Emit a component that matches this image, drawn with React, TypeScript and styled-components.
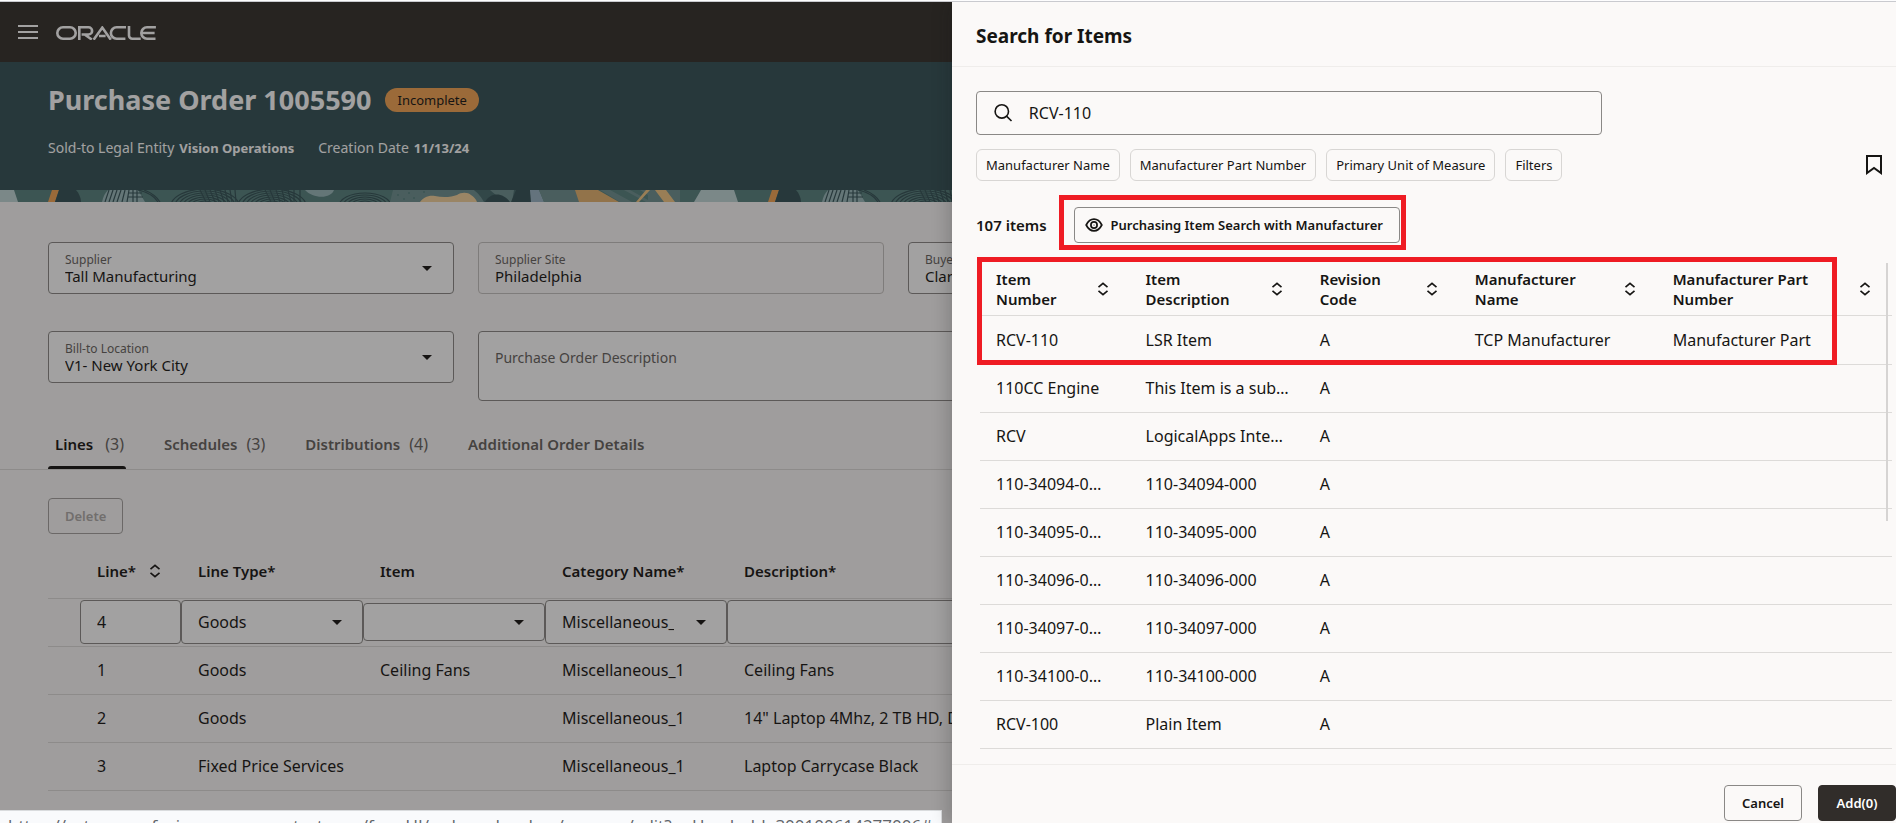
import React from "react";
import styled, { createGlobalStyle, css } from "styled-components";

const GlobalStyle = createGlobalStyle`
  *, *::before, *::after { box-sizing: border-box; }
  body { margin: 0; overflow: hidden; }
  body, button, input, select, textarea {
    font-family: "Noto Sans", "Open Sans", sans-serif;
    color: #161513;
  }
  button, select { cursor: pointer; }
`;

const ink = "#161513";
const muted = "#65625e";
const outline = "#8a8886";
const divider = "#dddbd9";
const surface = "#fbf9f8";

/* ---------- shell ---------- */

const Shell = styled.div`
  height: 100vh;
  display: flex;
  flex-direction: column;
  overflow: hidden;
`;

const BrowserEdge = styled.div`
  flex: none;
  height: 2px;
  background: #fdfdfe;
  border-bottom: 1px solid #c9cacf;
`;

const Stage = styled.div`
  position: relative;
  flex: 1;
  min-height: 0;
  overflow: hidden;
`;

const Page = styled.main`
  height: 100%;
  overflow: hidden;
  background: ${surface};
`;

const Scrim = styled.div`
  position: absolute;
  inset: 0;
  background: rgba(22, 21, 19, 0.4);
`;

/* ---------- page header ---------- */

const TopBar = styled.header`
  display: flex;
  align-items: center;
  gap: 18px;
  height: 60px;
  padding: 2px 18px 0;
  background: #332f2b;
`;

const MenuButton = styled.button`
  display: flex;
  padding: 0;
  border: 0;
  background: none;
`;

const Banner = styled.section`
  height: 128px;
  padding: 19px 48px 0;
  background: #325155;
  color: #fff;
`;

const TitleRow = styled.div`
  display: flex;
  align-items: center;
  gap: 14px;
  height: 38px;
`;

const PageTitle = styled.h1`
  margin: 0;
  font-size: 27px;
  line-height: 38px;
  font-weight: 700;
`;

const Badge = styled.span`
  padding: 0 12px;
  border-radius: 12px;
  background: #f4a452;
  color: ${ink};
  font-size: 13px;
  line-height: 24px;
`;

const Meta = styled.dl`
  display: flex;
  gap: 24px;
  margin: 19px 0 0;
`;

const MetaItem = styled.div`
  display: flex;
  align-items: baseline;
  gap: 5px;
  line-height: 20px;
  dt { font-size: 14px; }
  dd { margin: 0; font-size: 13px; font-weight: 700; }
`;

const Ribbon = styled.svg`
  display: block;
  width: 100%;
  height: 12px;
`;

/* ---------- form ---------- */

const Form = styled.form`
  display: grid;
  grid-template-columns: repeat(4, minmax(0, 1fr));
  column-gap: 24px;
  row-gap: 37px;
  align-items: start;
  padding: 40px 152px 0 48px;
`;

const FieldBox = styled.label<{ $readOnly?: boolean }>`
  position: relative;
  display: flex;
  flex-direction: column;
  height: 52px;
  padding: 11px 16px 0;
  border: 1px solid ${p => (p.$readOnly ? "#c4c2c0" : outline)};
  border-radius: 4px;
  background: ${p => (p.$readOnly ? "transparent" : "#fff")};
`;

const FieldLabel = styled.span`
  color: ${muted};
  font-size: 12px;
  line-height: 11px;
`;

const bareControl = css`
  appearance: none;
  width: 100%;
  padding: 0;
  border: 0;
  outline: 0;
  background: none;
`;

const FieldSelect = styled.select`
  ${bareControl}
  height: 21px;
  font-size: 15px;
`;

const FieldInput = styled.input`
  ${bareControl}
  height: 21px;
  font-size: 15px;
`;

const Caret = styled.svg<{ $right: number }>`
  position: absolute;
  right: ${p => p.$right}px;
  top: 50%;
  margin-top: -2px;
  pointer-events: none;
`;

const Description = styled.textarea`
  grid-column: span 2;
  display: block;
  width: 100%;
  height: 70px;
  padding: 16px;
  border: 1px solid ${outline};
  border-radius: 4px;
  background: #fff;
  font-size: 14px;
  line-height: 20px;
  resize: none;
  &::placeholder { color: ${muted}; opacity: 1; }
`;

/* ---------- tabs ---------- */

const Tabs = styled.div`
  display: flex;
  gap: 31px;
  margin-top: 20px;
  padding-left: 48px;
  border-bottom: 1px solid ${divider};
`;

const Tab = styled.button<{ $active?: boolean }>`
  display: flex;
  align-items: center;
  gap: ${p => (p.$active ? 12 : 9)}px;
  height: 48px;
  padding: 0 2px 2px 7px;
  border: 0;
  background: none;
  color: ${p => (p.$active ? ink : muted)};
  font-size: 15px;
  font-weight: 600;
  position: relative;
  ${p => p.$active && css`
    &::after {
      content: "";
      position: absolute;
      left: 0;
      right: 0;
      bottom: 0;
      height: 3px;
      border-radius: 3px 3px 0 0;
      background: ${ink};
    }
  `}
`;

const TabCount = styled.span`
  color: ${muted};
  font-size: 16px;
  font-weight: 400;
`;

/* ---------- buttons ---------- */

const Button = styled.button<{ $primary?: boolean }>`
  height: 36px;
  min-width: 75px;
  padding: 0 16px;
  border: 1px solid ${p => (p.$primary ? "#312d2a" : outline)};
  border-radius: 4px;
  background: ${p => (p.$primary ? "#312d2a" : "transparent")};
  color: ${p => (p.$primary ? "#fff" : ink)};
  font-size: 13px;
  font-weight: 600;
  &:disabled { color: #aeaba8; border-color: #a3a19f; }
`;

/* ---------- order lines ---------- */

const LinesPanel = styled.section`
  padding: 28px 0 0 48px;
`;

const LinesTable = styled.table`
  width: 100%;
  margin-top: 10px;
  table-layout: fixed;
  border-collapse: separate;
  border-spacing: 0;
  font-size: 16px;
  th, td {
    height: 48px;
    padding: 0 17px 2px;
    border-bottom: 1px solid ${divider};
    text-align: left;
    font-weight: 400;
    white-space: nowrap;
  }
  th { height: 55px; padding-bottom: 0; font-size: 15px; font-weight: 600; }
  th:first-child, td:first-child { width: 32px; padding: 0; }
  th:nth-child(2) { width: 101px; }
  th:nth-child(3), th:nth-child(4), th:nth-child(5) { width: 182px; }
  td.editing { padding: 0 0 2px; }
`;

const EditCell = styled.div<{ $compact?: boolean }>`
  position: relative;
  height: ${p => (p.$compact ? 38 : 44)}px;
  border: 1px solid ${outline};
  border-radius: 4px;
  background: #fff;
`;

const CellInput = styled.input`
  ${bareControl}
  height: 100%;
  padding: 0 16px;
  font-size: 16px;
`;

const CellSelectControl = styled.select`
  ${bareControl}
  height: 100%;
  padding: 0 52px 0 16px;
  font-size: 16px;
`;

const HeadSort = styled.div`
  display: flex;
  align-items: center;
  gap: 13px;
`;

/* ---------- drawer ---------- */

const Drawer = styled.aside`
  position: absolute;
  top: 0;
  right: 0;
  bottom: 0;
  width: calc(50% - 4px);
  display: flex;
  flex-direction: column;
  background: ${surface};
  box-shadow: -4px 0 16px rgba(22, 21, 19, 0.2);
`;

const DrawerHeader = styled.div`
  display: flex;
  align-items: center;
  flex: none;
  height: 65px;
  padding: 4px 24px 0;
  border-bottom: 1px solid #efedeb;
`;

const DrawerTitle = styled.h2`
  margin: 0;
  font-size: 19px;
  line-height: 28px;
  font-weight: 700;
`;

const DrawerBody = styled.div`
  flex: 1;
  min-height: 0;
  overflow: hidden;
  padding-top: 24px;
`;

const SearchBox = styled.label`
  display: flex;
  align-items: center;
  gap: 16px;
  width: calc(67% - 6px);
  height: 44px;
  margin-left: 24px;
  padding: 0 17px;
  border: 1px solid ${outline};
  border-radius: 4px;
`;

const SearchInput = styled.input`
  ${bareControl}
  height: 40px;
  font-size: 16px;
`;

const FilterRow = styled.div`
  display: flex;
  align-items: center;
  justify-content: space-between;
  margin-top: 14px;
  padding: 0 13px 0 24px;
`;

const Chips = styled.div`
  display: flex;
  gap: 10px;
`;

const Chip = styled.button`
  height: 32px;
  padding: 0 9px;
  border: 1px solid #d8d6d4;
  border-radius: 6px;
  background: transparent;
  font-size: 13px;
`;

const IconButton = styled.button`
  display: flex;
  padding: 0;
  border: 0;
  background: none;
`;

const ResultBar = styled.div`
  display: flex;
  align-items: center;
  gap: 27px;
  margin-top: 26px;
  padding-left: 24px;
`;

const ResultCount = styled.span`
  font-size: 15px;
  font-weight: 600;
`;

const ViewPicker = styled.div`
  position: relative;
`;

const ViewButton = styled(Button)`
  display: flex;
  align-items: center;
  gap: 8px;
  padding-left: 10px;
`;

const Highlight = styled.div<{ $inset: string }>`
  position: absolute;
  inset: ${p => p.$inset};
  border: 5px solid #ef1c24;
  pointer-events: none;
`;

const Results = styled.div`
  position: relative;
  margin: 20px 4px 0 28px;
`;

const HeaderMark = styled(Highlight)`
  bottom: auto;
  height: 108px;
`;

const Scrollbar = styled.div`
  position: absolute;
  top: 0;
  right: 4px;
  width: 2px;
  height: 258px;
  background: #d6d4d3;
`;

const ItemsTable = styled.table`
  width: 100%;
  table-layout: fixed;
  border-collapse: separate;
  border-spacing: 0;
  th, td {
    padding: 0 0 2px 16px;
    border-bottom: 1px solid ${divider};
    text-align: left;
  }
  th {
    height: 53px;
    padding-bottom: 0;
    font-size: 15px;
    line-height: 20px;
    font-weight: 600;
  }
  td {
    height: 48px;
    font-size: 16px;
    white-space: nowrap;
  }
  tbody tr:first-child td { height: 49px; padding-bottom: 0; }
`;

const ItemHead = styled.div`
  display: flex;
  align-items: center;
  justify-content: space-between;
  padding-right: 21px;
`;

const HeadLabel = styled.span<{ $narrow?: boolean }>`
  width: ${p => (p.$narrow ? "min-content" : "150px")};
`;

const DrawerFooter = styled.div`
  display: flex;
  flex: none;
  align-items: flex-start;
  justify-content: flex-end;
  gap: 16px;
  height: 59px;
  padding-top: 20px;
  border-top: 1px solid #efedeb;
`;

const FooterButton = styled(Button)`
  min-width: 78px;
`;

/* ---------- browser status ---------- */

const StatusBubble = styled.div`
  position: absolute;
  left: 0;
  bottom: 0;
  width: calc(50% - 6px);
  height: 13px;
  padding: 3px 8px 0;
  overflow: hidden;
  border: 1px solid #d9dbdd;
  border-width: 1px 1px 0 0;
  background: #f9fafc;
  color: #5f6368;
  font-family: "Open Sans", sans-serif;
  font-size: 17px;
  line-height: 24px;
  white-space: nowrap;
`;

/* ---------- drawings ---------- */

const OracleLogo = () => (
  <svg width="100" height="14" viewBox="0 0 100 14" fill="none" stroke="#fff" strokeWidth="2.6" role="img" aria-label="Oracle">
    <rect x="1.3" y="1.3" width="18.4" height="11.4" rx="5.7" />
    <path d="M23.3 13.9V1.3h9.2a3.6 3.6 0 0 1 0 7.2H25.6M28.6 8.5l7.2 5" />
    <path d="M37.6 13.7 46.3 1.6 54.8 13.7M43 10h6.6" />
    <path d="M70 1.3H60.6a5.7 5.7 0 0 0 0 11.4h8.8" />
    <path d="M73 .1v9.3a3.3 3.3 0 0 0 3.3 3.3h8.4" />
    <path d="M99.9 1.3H91a5.7 5.7 0 0 0 0 11.4h8.5M85.6 7h13" />
  </svg>
);

const SortIcon = () => (
  <svg width="12" height="14" viewBox="0 0 12 14" fill="none" stroke={ink} strokeWidth="1.6" aria-hidden="true">
    <path d="M1.5 5.2 6 1.3l4.5 3.9M1.5 8.8 6 12.7l4.5-3.9" />
  </svg>
);

const CaretDown = ({ right }: { right: number }) => (
  <Caret $right={right} width="10" height="5" viewBox="0 0 10 5" aria-hidden="true">
    <path d="M0 0h10L5 5z" fill={ink} />
  </Caret>
);

const SearchIcon = () => (
  <svg width="20" height="20" viewBox="0 0 20 20" fill="none" stroke={ink} strokeWidth="1.7" aria-hidden="true">
    <circle cx="8.3" cy="8.3" r="7.1" />
    <path d="m13.3 13.3 5.3 5.2" />
  </svg>
);

const EyeIcon = () => (
  <svg width="18" height="14" viewBox="0 0 18 14" fill="none" stroke={ink} strokeWidth="1.7" aria-hidden="true">
    <path d="M1.2 7C3 3.4 5.7 1.1 9 1.1s6 2.3 7.8 5.9c-1.8 3.6-4.5 5.9-7.8 5.9S3 10.600 1.2 7z" />
    <circle cx="9" cy="7" r="3.1" />
    <circle cx="9" cy="7" r="0.6" fill={ink} stroke="none" />
  </svg>
);

const BookmarkIcon = () => (
  <svg width="18" height="20" viewBox="0 0 18 20" fill="none" stroke={ink} strokeWidth="2" aria-hidden="true">
    <path d="M2 1h14v17l-7-5-7 5z" />
  </svg>
);

const arcs = (cx: number, radii: number[]) =>
  radii.map(r => <ellipse key={`${cx}-${r}`} cx={cx} cy="16" rx={r} ry={r * 0.5} />);

const BannerRibbon = () => (
  <Ribbon aria-hidden="true">
    <defs>
      <pattern id="ribbon" width="720" height="12" patternUnits="userSpaceOnUse">
        <rect width="720" height="12" fill="#55807d" />
        <path d="M0 0h14l4 12H0zM701 0h19v12h-26z" fill="#bed5d6" />
        <path d="M52 0h7l-4 12h-7z" fill="#f4a452" />
        <path d="M59 0h17c3 3 5 8 5 12H55z" fill="#325155" />
        <path d="M108 0h30l7 12h-43c1-5 3-9 6-12z" fill="#98b7ba" />
        <g fill="none" stroke="#325155" strokeWidth="1.2">
          <path d="M109 0l-4 12M113 0l-4 12M117 0l-4 12M121 0l-4 12M125 0l-3 12M129 0l-2 12M133 0v12M137 0v12M128 3h14M128 7h15" />
          <path d="M138 0q14 3 20 12M144 0q11 4 16 12" />
          {arcs(205, [10, 14, 18, 22, 26, 30, 34])}
          {arcs(272, [10, 14, 18, 22, 26, 30, 34])}
          {arcs(365, [6, 10, 14, 18, 22, 26])}
          <path d="M200 0l6 12M205 0l5 12M210 0l5 12M215 0l4 12M220 0l4 12M225 0l3 12M230 0l2 12M235 0l1 12M265 0l6 12M270 0l5 12M276 0l4 12M282 0l3 12M288 0l3 12M294 0v12M300 0v12" />
        </g>
        <path d="M305 0h29c-3 9-21 9-29 0z" fill="#98b7ba" />
        <path d="M393 0h81l14 12h-98z" fill="#6d908f" />
        <g fill="#55807d">
          <circle cx="398" cy="5" r="1" /><circle cx="404" cy="9" r="1" /><circle cx="409" cy="3" r="1" /><circle cx="414" cy="8" r="1" /><circle cx="424" cy="2" r="1" />
        </g>
        <path d="M420 12c3-4 8-7 15-6 8 2 17 1 22-1 4-3 11-3 14 0 3 2 5 4 6 7z" fill="#f2d09c" />
        <path d="M474 0h44v12h-34c-3-5-5-8-10-12z" fill="#45696c" />
        <path d="M490 0h24l-2 12h-8z" fill="#6d908f" />
        <path d="M485 12c5-10 18-10 25 0z" fill="#325155" />
        <path d="M516 0h14l2 12h-21z" fill="#325155" />
        <path d="M530 0h9l5 12h-13z" fill="#98b3c4" />
        <path d="M539 0h37l4 12h-36z" fill="#6d908f" />
        <path d="M600 0h80v12h-60z" fill="#6d908f" />
        <path d="M610 0h14l22 12h-14zM630 0h10l8 5v5z" fill="#55807d" />
        <path d="M575 0h23l21 12h-40z" fill="#e4b36f" />
        <path d="M646 0h4l-11 12h-3zM655 0h11l9 12h-11z" fill="#f0c582" />
      </pattern>
    </defs>
    <rect width="100%" height="12" fill="url(#ribbon)" />
  </Ribbon>
);

/* ---------- parts ---------- */

const SelectField = ({ label, value }: { label: string; value: string }) => (
  <FieldBox>
    <FieldLabel>{label}</FieldLabel>
    <FieldSelect defaultValue={value}><option>{value}</option></FieldSelect>
    <CaretDown right={21} />
  </FieldBox>
);

const CellSelect = ({ label, value, compact }: { label: string; value: string; compact?: boolean }) => (
  <EditCell $compact={compact}>
    <CellSelectControl aria-label={label} defaultValue={value}><option>{value}</option></CellSelectControl>
    <CaretDown right={20} />
  </EditCell>
);

const lines = [
  ["1", "Goods", "Ceiling Fans", "Miscellaneous_1", "Ceiling Fans"],
  ["2", "Goods", "", "Miscellaneous_1", "14\" Laptop 4Mhz, 2 TB HD, DVD"],
  ["3", "Fixed Price Services", "", "Miscellaneous_1", "Laptop Carrycase Black"],
];

const tabs: [string, number | null][] = [
  ["Lines", 3],
  ["Schedules", 3],
  ["Distributions", 4],
  ["Additional Order Details", null],
];

const itemColumns: [string, string, boolean][] = [
  ["Item Number", "16.4%", true],
  ["Item Description", "19.1%", true],
  ["Revision Code", "17%", true],
  ["Manufacturer Name", "21.7%", true],
  ["Manufacturer Part Number", "auto", false],
];

const items = [
  ["RCV-110", "LSR Item", "A", "TCP Manufacturer", "Manufacturer Part"],
  ["110CC Engine", "This Item is a sub…", "A", "", ""],
  ["RCV", "LogicalApps Inte…", "A", "", ""],
  ["110-34094-0…", "110-34094-000", "A", "", ""],
  ["110-34095-0…", "110-34095-000", "A", "", ""],
  ["110-34096-0…", "110-34096-000", "A", "", ""],
  ["110-34097-0…", "110-34097-000", "A", "", ""],
  ["110-34100-0…", "110-34100-000", "A", "", ""],
  ["RCV-100", "Plain Item", "A", "", ""],
];

const filters = ["Manufacturer Name", "Manufacturer Part Number", "Primary Unit of Measure", "Filters"];

export default function App() {
  return (
    <Shell>
      <GlobalStyle />
      <BrowserEdge />
      <Stage>
        <Page>
          <TopBar>
            <MenuButton aria-label="Navigation menu">
              <svg width="20" height="16" viewBox="0 0 20 16" stroke="#fff" strokeWidth="2" aria-hidden="true">
                <path d="M0 1h20M0 7h20M0 13h20" />
              </svg>
            </MenuButton>
            <OracleLogo />
          </TopBar>
          <Banner>
            <TitleRow>
              <PageTitle>Purchase Order 1005590</PageTitle>
              <Badge>Incomplete</Badge>
            </TitleRow>
            <Meta>
              <MetaItem><dt>Sold-to Legal Entity</dt><dd>Vision Operations</dd></MetaItem>
              <MetaItem><dt>Creation Date</dt><dd>11/13/24</dd></MetaItem>
            </Meta>
          </Banner>
          <BannerRibbon />
          <Form>
            <SelectField label="Supplier" value="Tall Manufacturing" />
            <FieldBox $readOnly>
              <FieldLabel>Supplier Site</FieldLabel>
              <FieldInput readOnly defaultValue="Philadelphia" />
            </FieldBox>
            <SelectField label="Buyer" value="Clare Furey" />
            <span />
            <SelectField label="Bill-to Location" value="V1- New York City" />
            <Description aria-label="Purchase Order Description" placeholder="Purchase Order Description" />
          </Form>
          <Tabs role="tablist">
            {tabs.map(([name, count], i) => (
              <Tab key={name} role="tab" aria-selected={i === 0} $active={i === 0}>
                {name}
                {count !== null && <TabCount>({count})</TabCount>}
              </Tab>
            ))}
          </Tabs>
          <LinesPanel>
            <Button disabled>Delete</Button>
            <LinesTable>
              <thead>
                <tr>
                  <th />
                  <th><HeadSort>Line*<SortIcon /></HeadSort></th>
                  <th>Line Type*</th>
                  <th>Item</th>
                  <th>Category Name*</th>
                  <th>Description*</th>
                </tr>
              </thead>
              <tbody>
                <tr>
                  <td />
                  <td className="editing"><EditCell><CellInput aria-label="Line" defaultValue="4" /></EditCell></td>
                  <td className="editing"><CellSelect label="Line Type" value="Goods" /></td>
                  <td className="editing"><CellSelect label="Item" value="" compact /></td>
                  <td className="editing"><CellSelect label="Category Name" value="Miscellaneous_1" /></td>
                  <td className="editing"><EditCell><CellInput aria-label="Description" defaultValue="" /></EditCell></td>
                </tr>
                {lines.map(row => (
                  <tr key={row[0]}>
                    <td />
                    {row.map((cell, i) => <td key={i}>{cell}</td>)}
                  </tr>
                ))}
              </tbody>
            </LinesTable>
          </LinesPanel>
        </Page>
        <Scrim />
        <StatusBubble>
          https://estm-usce.fusionapps.emea-test.com/fscmUI/redwood-orders/manage/edit?poHeaderId=300100614277006#
        </StatusBubble>
        <Drawer aria-label="Search for Items">
          <DrawerHeader><DrawerTitle>Search for Items</DrawerTitle></DrawerHeader>
          <DrawerBody>
            <SearchBox>
              <SearchIcon />
              <SearchInput aria-label="Search" defaultValue="RCV-110" />
            </SearchBox>
            <FilterRow>
              <Chips>{filters.map(f => <Chip key={f}>{f}</Chip>)}</Chips>
              <IconButton aria-label="Saved searches"><BookmarkIcon /></IconButton>
            </FilterRow>
            <ResultBar>
              <ResultCount>107 items</ResultCount>
              <ViewPicker>
                <ViewButton><EyeIcon />Purchasing Item Search with Manufacturer</ViewButton>
                <Highlight $inset="-12px -6px -7px -15px" />
              </ViewPicker>
            </ResultBar>
            <Results>
              <ItemsTable>
                <colgroup>{itemColumns.map(([name, width]) => <col key={name} width={width} />)}</colgroup>
                <thead>
                  <tr>
                    {itemColumns.map(([name, , narrow]) => (
                      <th key={name}>
                        <ItemHead><HeadLabel $narrow={narrow}>{name}</HeadLabel><SortIcon /></ItemHead>
                      </th>
                    ))}
                  </tr>
                </thead>
                <tbody>
                  {items.map(row => (
                    <tr key={row[0]}>{row.map((cell, i) => <td key={i}>{cell}</td>)}</tr>
                  ))}
                </tbody>
              </ItemsTable>
              <HeaderMark $inset="-6px 55px auto -3px" />
              <Scrollbar />
            </Results>
          </DrawerBody>
          <DrawerFooter>
            <FooterButton>Cancel</FooterButton>
            <FooterButton $primary>Add(0)</FooterButton>
          </DrawerFooter>
        </Drawer>
      </Stage>
    </Shell>
  );
}
